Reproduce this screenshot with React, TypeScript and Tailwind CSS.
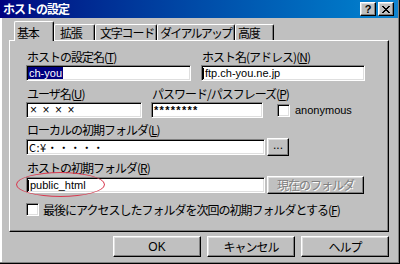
import clsx from "clsx";
import type { ReactNode } from "react";

const JP = "font-['Noto_Sans_CJK_JP','Liberation_Sans',sans-serif]";
const LATIN = "font-['Liberation_Sans','Noto_Sans_CJK_JP',sans-serif]";

const raised =
  "border border-white border-r-black border-b-black shadow-[inset_-1px_-1px_0_#808080,inset_1px_1px_0_#dfdfdf]";
const sunken =
  "border border-[#808080] border-r-white border-b-white shadow-[inset_1px_1px_0_#000,inset_-1px_-1px_0_#dfdfdf]";

/* (T) with the access key underlined */
function Key({ k }: { k: string }) {
  return (
    <>
      (<u className="underline-offset-1">{k}</u>)
    </>
  );
}

function Label({ children, className }: { children: ReactNode; className?: string }) {
  return (
    <div className={clsx("h-[14px] whitespace-nowrap pl-[1px] text-[12px] leading-[14px] tracking-[-1px]", className)}>
      {children}
    </div>
  );
}

function Field({ children, className }: { children?: ReactNode; className?: string }) {
  return (
    <div
      className={clsx(
        sunken,
        LATIN,
        "flex h-[16px] shrink-0 items-center overflow-hidden whitespace-nowrap bg-white pl-[1px] text-[11px] leading-none text-black",
        className,
      )}
    >
      {children}
    </div>
  );
}

function Caret() {
  return <span className="mr-[1px] inline-block h-[11px] w-px bg-black" />;
}

function CheckBox() {
  return <span className={clsx(sunken, "block h-[13px] w-[13px] shrink-0 bg-white")} />;
}

function Button({ children, className, disabled }: { children: ReactNode; className?: string; disabled?: boolean }) {
  return (
    <div
      className={clsx(
        raised,
        "flex shrink-0 items-center justify-center whitespace-nowrap bg-[#c0c0c0] text-[12px] tracking-[-1px]",
        disabled ? "text-[#808080] [text-shadow:1px_1px_0_#fff]" : "text-black",
        className,
      )}
    >
      {children}
    </div>
  );
}

const tabs = [
  { label: "基本", cls: "w-[40px] pl-[2px] tracking-[-1.2px]", active: true },
  { label: "拡張", cls: "w-[41px] pl-[5px] tracking-[-1.2px]" },
  { label: "文字コード", cls: "w-[62px] pl-[4px] tracking-[-1.2px]" },
  { label: "ダイアルアップ", cls: "w-[78px] pl-[2px] tracking-[-1.8px]" },
  { label: "高度", cls: "w-[39px] pl-[2px] tracking-[-1.2px]" },
];

export default function App() {
  return (
    <div
      className={clsx(
        JP,
        "relative flex h-[264px] w-[400px] flex-col overflow-hidden bg-[#c0c0c0] text-black shadow-[inset_-1px_-1px_0_#000,inset_-2px_-2px_0_#808080,inset_2px_0_0_#fff]",
      )}
    >
      {/* ── Title bar ───────────────────────────────────────── */}
      <div className="mr-[2px] flex h-[18px] shrink-0 items-center bg-linear-to-r from-[#000080] to-[#1084d0] pl-[3px] pr-[4px]">
        <span className="text-[12px] font-bold tracking-[-1px] text-white">ホストの設定</span>
        <div className="ml-auto flex gap-[2px]">
          <div className={clsx(raised, LATIN, "flex h-[14px] w-[16px] items-center justify-center bg-[#c0c0c0] text-[11px] font-bold leading-none")}>
            ?
          </div>
          <div className={clsx(raised, "flex h-[14px] w-[16px] items-center justify-center bg-[#c0c0c0]")}>
            <svg width="8" height="7" viewBox="0 0 8 7" shapeRendering="crispEdges">
              <path d="M0 0h2v1H0zM6 0h2v1H6zM1 1h2v1H1zM5 1h2v1H5zM2 2h4v1H2zM3 3h2v1H3zM2 4h4v1H2zM1 5h2v1H1zM5 5h2v1H5zM0 6h2v1H0zM6 6h2v1H6z" fill="#000" />
            </svg>
          </div>
        </div>
      </div>

      <div className="flex flex-col pl-[9px] pt-[3px]">
        {/* ── Tabs ───────────────────────────────────────────── */}
        <div className="flex items-end pl-[5px]">
          {tabs.map((tab) => (
            <div
              key={tab.label}
              className={clsx(
                "flex items-center overflow-hidden whitespace-nowrap rounded-t-[2px] border-l border-t border-r border-white border-r-black bg-[#c0c0c0] text-[12px] shadow-[inset_-1px_0_0_#808080]",
                tab.cls,
                tab.active ? "relative z-10 -mb-px h-[20px] pt-[3px]" : "h-[16px]",
              )}
            >
              {tab.label}
            </div>
          ))}
        </div>

        {/* ── Panel ──────────────────────────────────────────── */}
        <div className="flex h-[192px] w-[380px] flex-col border border-white border-r-black border-b-black pl-[16px] pt-[9px] shadow-[inset_-1px_-1px_0_#808080]">
          <div className="flex gap-[10px]">
            <div className="flex w-[165px] flex-col gap-[1px]">
              <Label>
                ホストの設定名<Key k="T" />
              </Label>
              <Field className="w-[165px]">
                <span className="inline-block h-[12px] bg-[#000080] px-[1px] text-[11px] leading-[12px] text-white">ch-you</span>
              </Field>
            </div>
            <div className="flex w-[164px] flex-col gap-[1px]">
              <Label>
                ホスト名(アドレス)<Key k="N" />
              </Label>
              <Field className="w-[164px]">
                <Caret />
                ftp.ch-you.ne.jp
              </Field>
            </div>
          </div>

          <div className="mt-[6px] flex">
            <div className="flex w-[116px] flex-col gap-[1px]">
              <Label>
                ユーザ名<Key k="U" />
              </Label>
              <Field className="w-[116px] pl-[3px]">
                <span className="text-[12px] tracking-[5.5px]">××××</span>
              </Field>
            </div>
            <div className="ml-[9px] flex w-[112px] flex-col gap-[1px]">
              <Label>
                パスワード/パスフレーズ<Key k="P" />
              </Label>
              <Field className="w-[112px] pl-[2px]">
                <span className="font-bold tracking-[1.3px]">********</span>
              </Field>
            </div>
            <div className="ml-[14px] mt-[15px] flex h-[16px] items-center">
              <CheckBox />
              <span className={clsx(LATIN, "ml-[5px] text-[11px]")}>anonymous</span>
            </div>
          </div>

          <div className="mt-[5px] flex flex-col gap-[1px]">
            <Label>
              ローカルの初期フォルダ<Key k="L" />
            </Label>
            <div className="flex h-[18px] items-center gap-[2px]">
              <Field className="w-[239px] pl-[2px]">
                <span className={clsx(JP, "text-[11px] tracking-[0.5px]")}>C:¥・・・・・</span>
              </Field>
              <Button className={clsx(LATIN, "h-[18px] w-[22px] items-end pb-[4px] text-[9px] leading-none tracking-normal")}>...</Button>
            </div>
          </div>

          <div className="mt-[5px] flex flex-col gap-[1px]">
            <Label>
              ホストの初期フォルダ<Key k="R" />
            </Label>
            <div className="relative flex h-[18px] items-center gap-[2px]">
              <Field className="w-[239px]">
                <Caret />
                public_html
              </Field>
              <Button disabled className="h-[18px] w-[97px]">
                現在のフォルダ
              </Button>
              {/* red marker circled on the screenshot */}
              <span className="pointer-events-none absolute left-[-10px] top-[-4px] h-[25px] w-[89px] rounded-[50%] border border-[#d83a50]" />
            </div>
          </div>

          <div className="mt-[9px] flex h-[13px] items-center">
            <CheckBox />
            <span className="ml-[4px] whitespace-nowrap text-[12px] leading-none tracking-[-1px]">
              最後にアクセスしたフォルダを次回の初期フォルダとする<Key k="F" />
            </span>
          </div>
        </div>

        {/* ── Dialog buttons ─────────────────────────────────── */}
        <div className="mt-[4px] flex w-[380px] justify-end gap-[6px]">
          <Button className={clsx(LATIN, "h-[21px] w-[88px] text-[12px] tracking-normal")}>OK</Button>
          <Button className="h-[21px] w-[88px]">キャンセル</Button>
          <Button className="h-[21px] w-[88px]">ヘルプ</Button>
        </div>
      </div>
    </div>
  );
}
